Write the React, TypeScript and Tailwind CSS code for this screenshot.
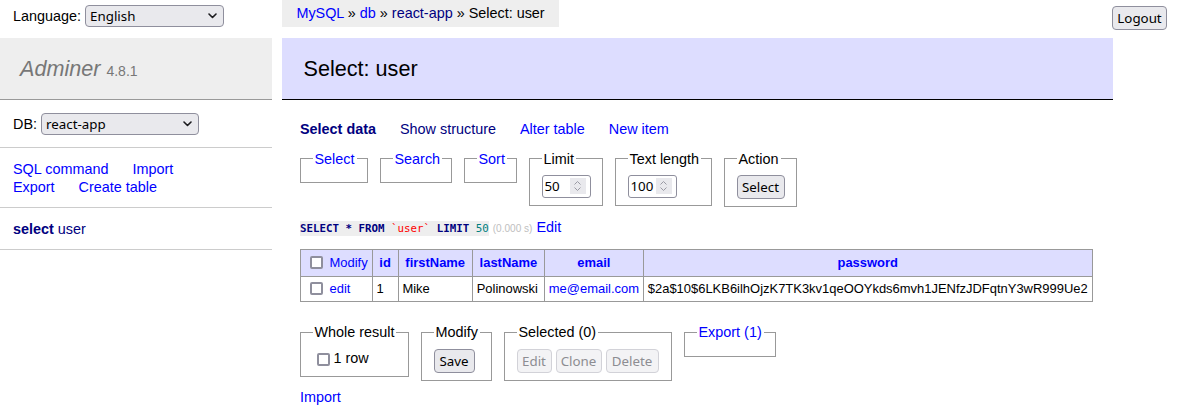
import React from 'react'

const ctl = "font-['Noto_Sans',sans-serif] text-[13.33px]"

function Chevron() {
  return (
    <svg width="9" height="6" viewBox="0 0 9 6" className="shrink-0">
      <path d="M1 1l3.5 3.5L8 1" fill="none" stroke="#1b1b1f" strokeWidth="1.6" strokeLinecap="round" strokeLinejoin="round" />
    </svg>
  )
}

function Select({ value, className = '' }: { value: string; className?: string }) {
  return (
    <div className={`flex h-[22px] items-center justify-between rounded-[4px] border border-[#8f8f9d] bg-[#e9e9ed] pl-[4px] pr-[6px] text-black ${ctl} ${className}`}>
      <span>{value}</span>
      <Chevron />
    </div>
  )
}

function NumberInput({ value }: { value: string }) {
  return (
    <div className={`flex h-[23px] w-[49px] items-center justify-between rounded-[3px] border border-[#8f8f9d] bg-white pl-[2px] pr-[4px] text-black ${ctl}`}>
      <span>{value}</span>
      <span className="flex h-[16px] w-[16px] flex-col items-center justify-center gap-[2px] bg-[#e9e9ed]">
        <svg width="7" height="4" viewBox="0 0 7 4">
          <path d="M0.5 3.5L3.5 0.5L6.5 3.5" fill="none" stroke="#9a9aa4" strokeWidth="1" />
        </svg>
        <svg width="7" height="4" viewBox="0 0 7 4">
          <path d="M0.5 0.5L3.5 3.5L6.5 0.5" fill="none" stroke="#9a9aa4" strokeWidth="1" />
        </svg>
      </span>
    </div>
  )
}

function Btn({ children, disabled = false, className = '' }: { children: React.ReactNode; disabled?: boolean; className?: string }) {
  return (
    <button
      className={`inline-flex h-[24px] items-center justify-center rounded-[4px] border px-[4.5px] ${ctl} ${
        disabled ? 'border-[#d2d2d8] bg-[#f3f3f5] text-[#8d8d92]' : 'border-[#8f8f9d] bg-[#e9e9ed] text-black'
      } ${className}`}
    >
      {children}
    </button>
  )
}

function Checkbox({ className = '' }: { className?: string }) {
  return <span className={`inline-block h-[13px] w-[13px] rounded-[2px] border-2 border-[#8f8f9d] bg-white align-[-2px] ${className}`} />
}

function Box({ legend, link = false, className = '', children }: { legend: string; link?: boolean; className?: string; children?: React.ReactNode }) {
  return (
    <fieldset className={`min-w-0 shrink-0 border border-[#999] px-[11.5px] py-[7.2px] ${className}`}>
      <legend className={`whitespace-nowrap px-[2px] ${link ? 'text-[#00f]' : 'text-black'}`}>{legend}</legend>
      {children}
    </fieldset>
  )
}

const cell = 'border border-[#999] px-[3.9px] py-[2.6px] whitespace-nowrap'
const head = 'border border-[#999] px-[6.75px] py-[2.6px] text-center font-bold text-[#00f] whitespace-nowrap'

export default function App() {
  return (
    <div className="flex min-h-[412px] w-[1184px] bg-white font-['Liberation_Sans',Arial,sans-serif] text-[14.4px] leading-[18px] text-black">
      {/* menu */}
      <aside className="w-[272px] shrink-0">
        <div className="flex h-[32px] items-center gap-[4px] pl-[13px]">
          <span>Language:</span>
          <Select value="English" className="w-[139px]" />
        </div>
        <h1 className="mt-[6px] h-[62px] border-b border-[#999] bg-[#eee] pl-[20px] pt-[17px] text-[21.6px] font-normal leading-[27px] text-[#777]">
          <span className="italic">Adminer</span> <span className="text-[14px]">4.8.1</span>
        </h1>
        <div className="flex h-[48px] items-center gap-[4px] border-b border-[#ccc] pl-[13px]">
          <span>DB:</span>
          <Select value="react-app" className="w-[158px]" />
        </div>
        <div className="border-b border-[#ccc] px-[13px] py-[11.5px] text-[#00f]">
          <div className="flex gap-[24px]">
            <a>SQL command</a>
            <a>Import</a>
          </div>
          <div className="flex gap-[24px]">
            <a>Export</a>
            <a>Create table</a>
          </div>
        </div>
        <div className="h-[42px] border-b border-[#ccc] pl-[13px] pt-[12px] text-[#000080]">
          <a className="font-bold">select</a> <a>user</a>
        </div>
      </aside>

      {/* content */}
      <main className="flex-1 pl-[10px]">
        <div className="flex h-[27px] items-start justify-between">
          <div className="h-[27px] bg-[#eee] px-[14.4px] leading-[27px]">
            <a className="text-[#00f]">MySQL</a> » <a className="text-[#00f]">db</a> » <a className="text-[#000080]">react-app</a> » Select: user
          </div>
          <Btn className="mr-[17px] mt-[6px] h-[23px] w-[55px]">Logout</Btn>
        </div>
        <h2 className="mr-[71px] mt-[11px] h-[62px] border-b border-black bg-[#ddf] pl-[21.6px] pt-[17px] text-[21.6px] font-normal leading-[27px]">
          Select: user
        </h2>

        <div className="pl-[18px]">
          <p className="mt-[20px] flex gap-[24px]">
            <a className="font-bold text-[#000080]">Select data</a>
            <a className="text-[#000080]">Show structure</a>
            <a className="text-[#00f]">Alter table</a>
            <a className="text-[#00f]">New item</a>
          </p>

          <div className="mt-[11.5px] flex items-start gap-3">
            <Box legend="Select" link className="w-[68px]" />
            <Box legend="Search" link className="w-[72px]" />
            <Box legend="Sort" link className="w-[53px]" />
            <Box legend="Limit" className="w-[74px]">
              <NumberInput value="50" />
            </Box>
            <Box legend="Text length" className="w-[97px]">
              <NumberInput value="100" />
            </Box>
            <Box legend="Action" className="w-[73px]">
              <Btn className="w-[48px]">Select</Btn>
            </Box>
          </div>

          <p className="mt-[11.5px]">
            <code className="inline-block bg-[#eee] font-['DejaVu_Sans_Mono',monospace] text-[10.8px] leading-[15px]">
              <span className="font-bold text-[#000080]">SELECT</span>{' '}
              <span className="font-bold text-[#000080]">*</span>{' '}
              <span className="font-bold text-[#000080]">FROM</span>{' '}
              <span className="text-[#f00]">`user`</span>{' '}
              <span className="font-bold text-[#000080]">LIMIT</span>{' '}
              <span className="text-[#007f7f]">50</span>
            </code>{' '}
            <span className="text-[10.08px] text-[#c0c0c0]">(0.000 s)</span> <a className="text-[#00f]">Edit</a>
          </p>

          <table className="mt-[11px] border-collapse text-[12.96px] leading-[16.2px]">
            <thead>
              <tr className="bg-[#ddf]">
                <td className={`${cell} h-[27px]`}>
                  <Checkbox className="ml-[5px] mr-[3px]" /> <a className="text-[#00f]">Modify</a>
                </td>
                <th className={head}>id</th>
                <th className={head}>firstName</th>
                <th className={head}>lastName</th>
                <th className={head}>email</th>
                <th className={head}>password</th>
              </tr>
            </thead>
            <tbody>
              <tr>
                <td className={`${cell} h-[25px]`}>
                  <Checkbox className="ml-[5px] mr-[3px]" /> <a className="text-[#00f]">edit</a>
                </td>
                <td className={cell}>1</td>
                <td className={cell}>Mike</td>
                <td className={cell}>Polinowski</td>
                <td className={`${cell} text-[#00f]`}>me@email.com</td>
                <td className={cell}>$2a$10$6LKB6ilhOjzK7TK3kv1qeOOYkds6mvh1JENfzJDFqtnY3wR999Ue2</td>
              </tr>
            </tbody>
          </table>

          <div className="mt-[21px] flex items-start gap-3">
            <Box legend="Whole result" className="w-[109px]">
              <label className="flex h-[20px] items-start">
                <Checkbox className="ml-[4px] mr-[4px] mt-[4px]" />1 row
              </label>
            </Box>
            <Box legend="Modify" className="w-[71px]">
              <Btn className="w-[41px]">Save</Btn>
            </Box>
            <Box legend="Selected (0)" className="w-[168px]">
              <div className="flex gap-[4px]">
                <Btn disabled className="w-[35px]">Edit</Btn>
                <Btn disabled className="w-[46px]">Clone</Btn>
                <Btn disabled className="w-[53px]">Delete</Btn>
              </div>
            </Box>
            <Box legend="Export (1)" link className="w-[92px]" />
          </div>

          <p className="mt-[7px]">
            <a className="text-[#00f]">Import</a>
          </p>
        </div>
      </main>
    </div>
  )
}
